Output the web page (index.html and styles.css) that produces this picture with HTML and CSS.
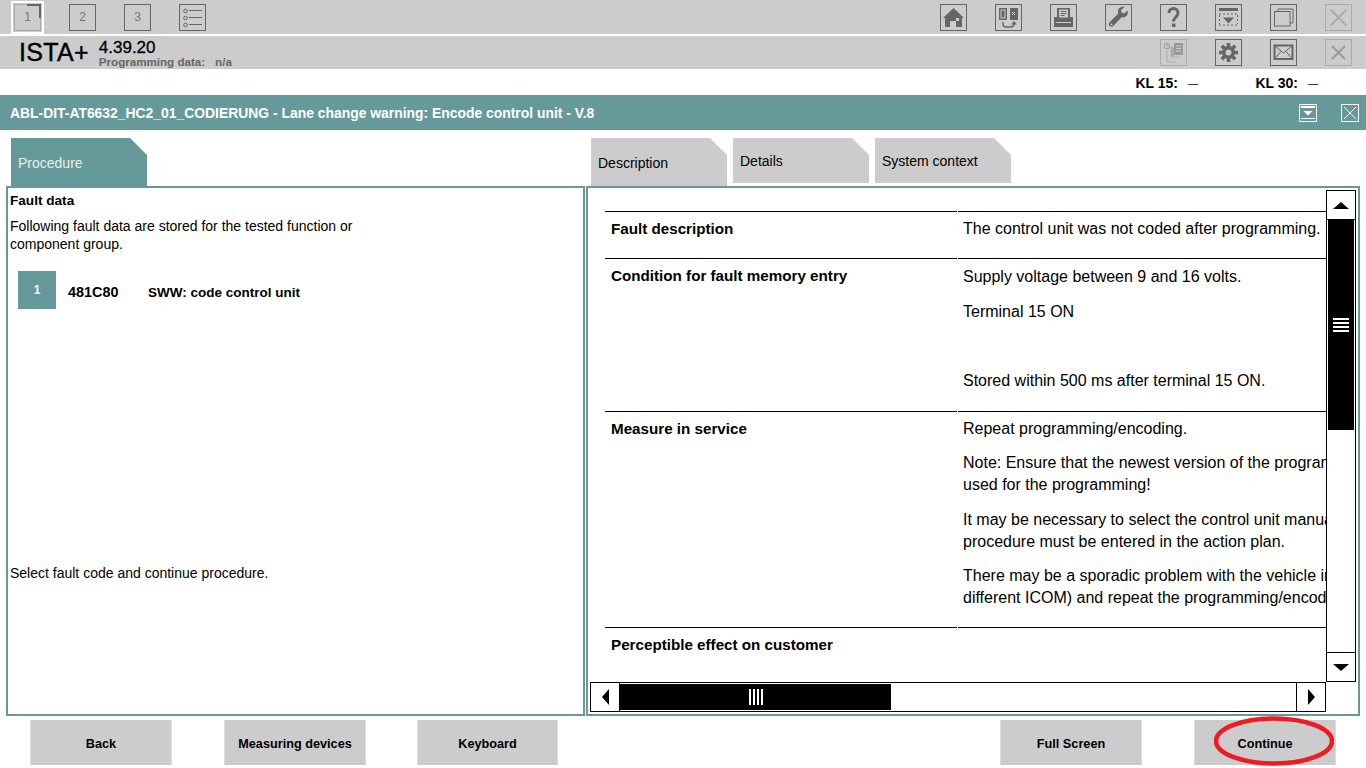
FILE: index.html
```html
<!DOCTYPE html>
<html lang="en">
<head>
    <meta charset="UTF-8">
    <title>ISTA+</title>
    <link rel="stylesheet" href="styles.css">
</head>
<body>
    <div class="toolbar toolbar-main">
        <div class="step-group">
            <div class="icon-btn step current"><span>1</span></div>
            <div class="icon-btn step"><span>2</span></div>
            <div class="icon-btn step"><span>3</span></div>
            <div class="icon-btn">
                <svg viewBox="0 0 25 25"><g fill="none" stroke="#666"><circle cx="5.500" cy="6" r="1.800"/><circle cx="5.500" cy="13" r="1.800"/><circle cx="5.500" cy="20" r="1.800"/><path d="M9 5.500h13M9 12.500h13M9 19.500h13"/></g></svg>
            </div>
        </div>
        <div class="icon-group">
            <div class="icon-btn">
                <svg viewBox="0 0 25 25"><path fill="#666" d="M12.500 3 L23 13 L21 13 L21 22 L15 22 L15 16 L9 16 L9 22 L4 22 L4 13 L2 13 Z"/><rect x="15" y="13" width="3" height="3" fill="#ccc"/></svg>
            </div>
            <div class="icon-btn">
                <svg viewBox="0 0 25 25"><rect x="3" y="3" width="8" height="12" fill="#666"/><rect x="14" y="3" width="8" height="12" fill="#666"/><rect x="5" y="5" width="4" height="8" fill="none" stroke="#ccc"/><path d="M16 7l3 3M19 7l-3 3" stroke="#ccc"/><path d="M7 17v2c0 2 1 3 3 3h5c2 0 3-1 3-3" fill="none" stroke="#666" stroke-width="1.400"/><path d="M15 19.500h6l-3-3.500z" fill="#666"/></svg>
            </div>
            <div class="icon-btn">
                <svg viewBox="0 0 25 25"><path fill="#666" d="M6 3h13v9h3v10H3V12h3z"/><rect x="8" y="4.500" width="9" height="8" fill="#ccc"/><path d="M9.500 6.500h6M9.500 8.500h6M9.500 10.500h4" stroke="#666"/><rect x="5" y="17" width="15" height="1" fill="#ccc"/></svg>
            </div>
            <div class="icon-btn">
                <svg viewBox="0 0 25 25"><path fill="#666" d="M21.500 5.500l-3.500 3-2.500-1-.5-2.500 3.500-3c-3-1-6.500 1-6.500 4.500 0 .8.100 1.300.3 1.900L3.500 17.500c-1.500 1.500-.5 3.500.8 4s2.200.3 3-.5l8.200-8.700c3.800 1 7.500-2.500 6-6.800z"/><circle cx="5.500" cy="19.500" r="1" fill="#ccc"/></svg>
            </div>
            <div class="icon-btn">
                <svg viewBox="0 0 25 25"><path fill="none" stroke="#666" stroke-width="3" d="M8 8c0-6 9-6 9 0 0 4-4.500 4-4.500 8.500"/><rect x="11" y="18.500" width="3.500" height="3.500" fill="#666"/></svg>
            </div>
            <div class="icon-btn">
                <svg viewBox="0 0 25 25"><rect x="3" y="3" width="19" height="3" fill="#666"/><path d="M3 9h19M3 20h19" stroke="#666" stroke-dasharray="2 2" fill="none"/><path d="M3.500 10v9M21.500 10v9" stroke="#666" stroke-dasharray="2 2"/><path d="M7 12.500h11l-5.500 6z" fill="#666"/></svg>
            </div>
            <div class="icon-btn">
                <svg viewBox="0 0 25 25"><path fill="none" stroke="#666" d="M7 6.500V4h15v14h-3"/><rect x="3.500" y="6.500" width="15.500" height="14.500" fill="#ccc" stroke="#666"/></svg>
            </div>
            <div class="icon-btn off">
                <svg viewBox="0 0 25 25"><path fill="none" stroke="#aaa" stroke-width="1.800" d="M4.500 4.500l16 16M20.500 4.500l-16 16"/></svg>
            </div>
        </div>
    </div>

    <div class="toolbar toolbar-sub">
        <div class="brand">
            <span class="brand-name">ISTA+</span>
            <div class="brand-info">
                <div class="version">4.39.20</div>
                <div class="prog-data"><span>Programming data:</span><span>n/a</span></div>
            </div>
        </div>
        <div class="icon-group">
            <div class="icon-btn off">
                <svg viewBox="0 0 25 25"><circle cx="6" cy="6" r="2.800" fill="none" stroke="#999"/><path d="M6 4.500V6h1.500" fill="none" stroke="#999"/><rect x="13" y="3" width="9" height="12" fill="#999"/><path d="M15 6h5M15 8.500h5M15 11h5" stroke="#ccc"/><path d="M10 7v10h9M6 11v11h9" fill="none" stroke="#aaa"/><rect x="10" y="7" width="3" height="9" fill="#aaa"/></svg>
            </div>
            <div class="icon-btn">
                <svg viewBox="0 0 25 25"><g stroke="#666" stroke-width="3.600"><path d="M12.500 3v19M3 12.500h19M5.800 5.800l13.400 13.400M19.200 5.800L5.800 19.200"/></g><circle cx="12.500" cy="12.500" r="6.500" fill="#666"/><circle cx="12.500" cy="12.500" r="3" fill="#ccc"/></svg>
            </div>
            <div class="icon-btn">
                <svg viewBox="0 0 25 25"><rect x="3.500" y="5.500" width="18" height="13.500" fill="#ccc" stroke="#666" stroke-width="2"/><path d="M4 6l8.500 7 8.500-7M4 18.500l6-7M21 18.500l-6-7" fill="none" stroke="#666"/></svg>
            </div>
            <div class="icon-btn off">
                <svg viewBox="0 0 25 25"><path fill="none" stroke="#999" stroke-width="1.800" d="M6 6l13 13M19 6L6 19"/></svg>
            </div>
        </div>
    </div>

    <div class="terminals">
        <div class="terminal kl15">KL 15:<span class="dash">—</span></div>
        <div class="terminal">KL 30:<span class="dash">—</span></div>
    </div>

    <div class="title-bar">
        <span>ABL-DIT-AT6632_HC2_01_CODIERUNG - Lane change warning: Encode control unit - V.8</span>
        <div class="title-icons">
            <div class="title-btn">
                <svg viewBox="0 0 16 16"><rect x="1" y="1" width="14" height="2" fill="#fff"/><path d="M3.500 6h9L8 10.500z" fill="#fff"/><rect x="1" y="13" width="14" height="1" fill="#fff"/></svg>
            </div>
            <div class="title-btn">
                <svg viewBox="0 0 16 16"><path d="M2 2l12 12M14 2L2 14" stroke="#fff" fill="none"/></svg>
            </div>
        </div>
    </div>

    <div class="workspace">
        <div class="pane pane-left">
            <div class="tabs">
                <div class="tab tab-active">Procedure</div>
            </div>
            <div class="panel left-panel">
                <h3>Fault data</h3>
                <p class="intro">Following fault data are stored for the tested function or<br>component group.</p>
                <div class="fault-row">
                    <div class="fault-num">1</div>
                    <div class="fault-code">481C80</div>
                    <div class="fault-name">SWW: code control unit</div>
                </div>
                <p class="hint">Select fault code and continue procedure.</p>
            </div>
        </div>

        <div class="pane pane-right">
            <div class="tabs">
                <div class="tab tab-current">Description</div>
                <div class="tab tab-back">Details</div>
                <div class="tab tab-back">System context</div>
            </div>
            <div class="panel right-panel">
                <div class="doc-view">
                    <div class="doc-table">
                        <div class="doc-head">Fault description</div>
                        <div class="doc-cell"><p>The control unit was not coded after programming.</p></div>

                        <div class="doc-head">Condition for fault memory entry</div>
                        <div class="doc-cell doc-cell-loose">
                            <p>Supply voltage between 9 and 16 volts.</p>
                            <p>Terminal 15 ON</p>
                            <p>&nbsp;</p>
                            <p>Stored within 500 ms after terminal 15 ON.</p>
                        </div>

                        <div class="doc-head">Measure in service</div>
                        <div class="doc-cell">
                            <p>Repeat programming/encoding.</p>
                            <p>Note: Ensure that the newest version of the programming system is<br>used for the programming!</p>
                            <p>It may be necessary to select the control unit manually. The<br>procedure must be entered in the action plan.</p>
                            <p>There may be a sporadic problem with the vehicle interface (use a<br>different ICOM) and repeat the programming/encoding.</p>
                        </div>

                        <div class="doc-head">Perceptible effect on customer</div>
                        <div class="doc-cell"></div>
                    </div>
                </div>
                <div class="vscroll">
                    <div class="scroll-btn v-btn"><i class="arrow arrow-up"></i></div>
                    <div class="v-track">
                        <div class="v-thumb"><i class="grip-h"></i></div>
                    </div>
                    <div class="scroll-btn v-btn"><i class="arrow arrow-down"></i></div>
                </div>
                <div class="hscroll">
                    <div class="scroll-btn h-btn"><i class="arrow arrow-left"></i></div>
                    <div class="h-track">
                        <div class="h-thumb"><i class="grip-v"></i></div>
                    </div>
                    <div class="scroll-btn h-btn"><i class="arrow arrow-right"></i></div>
                </div>
            </div>
        </div>
    </div>

    <div class="footer">
        <div class="btn">Back</div>
        <div class="btn">Measuring devices</div>
        <div class="btn btn-keyboard">Keyboard</div>
        <div class="btn btn-fullscreen">Full Screen</div>
        <div class="btn btn-continue">
            Continue
            <svg class="red-mark" viewBox="0 0 120 50"><ellipse cx="60" cy="25" rx="58" ry="22.500" fill="none" stroke="#ed1c24" stroke-width="4.500"/></svg>
        </div>
    </div>
</body>
</html>
```

FILE: styles.css
```css
* {
    box-sizing: border-box;
}

body {
    margin: 0;
    width: 1366px;
    height: 768px;
    overflow: hidden;
    background-color: #fff;
    font-family: "Liberation Sans", Arial, sans-serif;
    font-size: 14px;
    color: #000;
}

/* top toolbars */
.toolbar {
    display: flex;
    align-items: center;
    background-color: #ccc;
    padding-right: 14px;
}

.toolbar-main {
    height: 34px;
    margin-bottom: 2px;
}

.toolbar-sub {
    height: 33px;
}

.step-group {
    display: flex;
    gap: 28px;
    margin-left: 14px;
    margin-right: auto;
}

.icon-group {
    display: flex;
    gap: 28px;
    margin-left: auto;
}

.icon-btn {
    width: 27px;
    height: 27px;
    border: 1px solid #666;
    display: flex;
    align-items: center;
    justify-content: center;
}

.icon-btn svg {
    width: 25px;
    height: 25px;
    display: block;
}

.icon-btn.off {
    border-color: #aaa;
}

.step {
    color: #777;
    font-size: 12px;
}

.step.current {
    position: relative;
    border-color: #aaa;
    outline: 2px solid #fff;
    outline-offset: 1px;
}

/* the dark corner of the current step */
.step.current::after {
    content: "";
    position: absolute;
    top: -1px;
    right: -1px;
    width: 12px;
    height: 12px;
    border-top: 2px solid #666;
    border-right: 2px solid #666;
}

.brand {
    display: flex;
    align-items: center;
    margin-left: 19px;
    margin-right: auto;
}

.brand-name {
    font-size: 25px;
    margin-right: 10px;
    -webkit-text-stroke: 0.4px #000;
    letter-spacing: 0.3px;
}

.brand-info {
    padding-top: 3px;
}

.version {
    font-size: 17px;
    line-height: 13px;
    -webkit-text-stroke: 0.3px #000;
}

.prog-data {
    display: flex;
    gap: 10px;
    margin-top: 1px;
    font-size: 11.600px;
    font-weight: bold;
    line-height: 13px;
    color: #666;
}

/* KL row */
.terminals {
    height: 26px;
    display: flex;
    justify-content: flex-end;
    align-items: center;
    padding: 2px 48px 0 0;
    font-weight: bold;
    font-size: 14px;
}

.terminal {
    display: flex;
    align-items: center;
}

.kl15 {
    width: 120px;
}

.dash {
    margin-left: 10px;
    font-size: 10px;
    font-weight: normal;
}

/* title bar */
.title-bar {
    height: 35px;
    background-color: #669999;
    color: #fff;
    font-weight: bold;
    font-size: 13.900px;
    display: flex;
    align-items: center;
    justify-content: space-between;
    padding: 0 7px 0 10px;
}

.title-icons {
    display: flex;
    gap: 24px;
}

.title-btn {
    width: 18px;
    height: 18px;
    border: 1px solid #fff;
}

.title-btn svg {
    width: 16px;
    height: 16px;
    display: block;
}

/* tabs and panels */
.workspace {
    display: flex;
    height: 586px;
    margin-left: 6px;
}

.pane-left {
    width: 579px;
    margin-right: 1px;
}

.pane-right {
    width: 774px;
}

.tabs {
    height: 56px;
    padding: 8px 0 0 5px;
    display: flex;
    gap: 6px;
}

.tab {
    width: 136px;
    height: 48px;
    padding-left: 7px;
    clip-path: polygon(0 0, 119px 0, 100% 17px, 100% 100%, 0 100%);
    background-color: #ccc;
    line-height: 51px;
}

.tab-active {
    background-color: #669999;
    color: #e6eeee;
}

.tab-back {
    height: 45px;
    line-height: 47px;
}

.panel {
    height: 530px;
    border: 2px solid #669999;
}

.left-panel {
    padding: 0 2px;
    display: flex;
    flex-direction: column;
}

.left-panel h3 {
    margin: 4px 0 0;
    font-size: 13.600px;
    line-height: 17px;
}

.intro {
    margin: 8px 0 0;
    line-height: 18px;
}

.fault-row {
    display: flex;
    align-items: center;
    margin: 18px 0 0 8px;
    font-weight: bold;
    font-size: 13.500px;
}

.fault-num {
    width: 38px;
    height: 38px;
    background-color: #669999;
    color: #fff;
    font-size: 12px;
    display: flex;
    align-items: center;
    justify-content: center;
    margin-right: 12px;
}

.fault-code {
    width: 80px;
    padding-top: 4px;
    font-size: 14.400px;
}

.fault-name {
    padding-top: 4px;
}

.hint {
    margin: 255px 0 0;
    line-height: 18px;
}

/* description view with its scrollbars */
.right-panel {
    display: grid;
    grid-template-columns: 1fr 30px;
    grid-template-rows: 494px 30px;
    padding-right: 2px;
}

.doc-view {
    overflow: hidden;
    font-size: 16px;
    padding: 23px 0 0 17px;
}

.doc-table {
    display: grid;
    grid-template-columns: 352px 400px;
    grid-template-rows: 47px 153px 216px 60px;
    column-gap: 1px;
}

.doc-head,
.doc-cell {
    border-top: 1px solid #000;
    padding-top: 6px;
    line-height: 22px;
}

.doc-head {
    padding-left: 6px;
    font-weight: bold;
    font-size: 15.200px;
}

.doc-cell {
    padding-left: 5px;
    white-space: nowrap;
}

.doc-cell p {
    margin: 0 0 12.300px;
}

.doc-cell-loose {
    padding-top: 7px;
}

.doc-cell-loose p {
    margin-bottom: 12.700px;
}

.vscroll {
    margin-top: 2px;
    display: flex;
    flex-direction: column;
    height: 492px;
    border-left: 1px solid #000;
    border-right: 1px solid #000;
}

.v-btn {
    height: 30px;
    margin: 0 -1px;
    border: 1px solid #000;
}

.v-track {
    flex: 1;
    padding: 0 1px;
}

.v-thumb {
    height: 210px;
    background-color: #000;
    display: flex;
    align-items: center;
    justify-content: center;
}

.hscroll {
    margin-left: 2px;
    display: flex;
    height: 30px;
    border-top: 1px solid #000;
    border-bottom: 1px solid #000;
}

.h-btn {
    width: 30px;
    margin: -1px 0;
    border: 1px solid #000;
}

.h-track {
    flex: 1;
    padding: 1px 0;
}

.h-thumb {
    width: 271px;
    height: 26px;
    background-color: #000;
    display: flex;
    align-items: center;
    justify-content: center;
}

.scroll-btn {
    flex: none;
    display: flex;
    align-items: center;
    justify-content: center;
    background-color: #fff;
}

.arrow {
    display: block;
    width: 0;
    height: 0;
    border-style: solid;
}

.arrow-up {
    border-width: 0 8px 7px;
    border-color: transparent transparent #000;
}

.arrow-down {
    border-width: 7px 8px 0;
    border-color: #000 transparent transparent;
}

.arrow-left {
    border-width: 8px 7px 8px 0;
    border-color: transparent #000 transparent transparent;
}

.arrow-right {
    border-width: 8px 0 8px 7px;
    border-color: transparent transparent transparent #000;
}

.grip-h {
    display: block;
    width: 16px;
    height: 14px;
    background: repeating-linear-gradient(to bottom, #fff 0 2px, #000 2px 4px);
}

.grip-v {
    display: block;
    width: 14px;
    height: 16px;
    background: repeating-linear-gradient(to right, #fff 0 2px, #000 2px 4px);
}

/* bottom buttons */
.footer {
    display: flex;
    gap: 52px;
    padding: 4px 30px 0;
}

.btn {
    position: relative;
    width: 142px;
    height: 45px;
    background-color: #ccc;
    border-left: 1px solid #ddd;
    border-right: 1px solid #ddd;
    display: flex;
    align-items: center;
    justify-content: center;
    padding-top: 3px;
    font-weight: bold;
    font-size: 12.700px;
}

.btn-keyboard {
    width: 141px;
    margin-left: -1px;
}

.btn-fullscreen {
    margin-left: auto;
}

.red-mark {
    position: absolute;
    left: 19px;
    top: -4px;
    width: 120px;
    height: 50px;
}
```
